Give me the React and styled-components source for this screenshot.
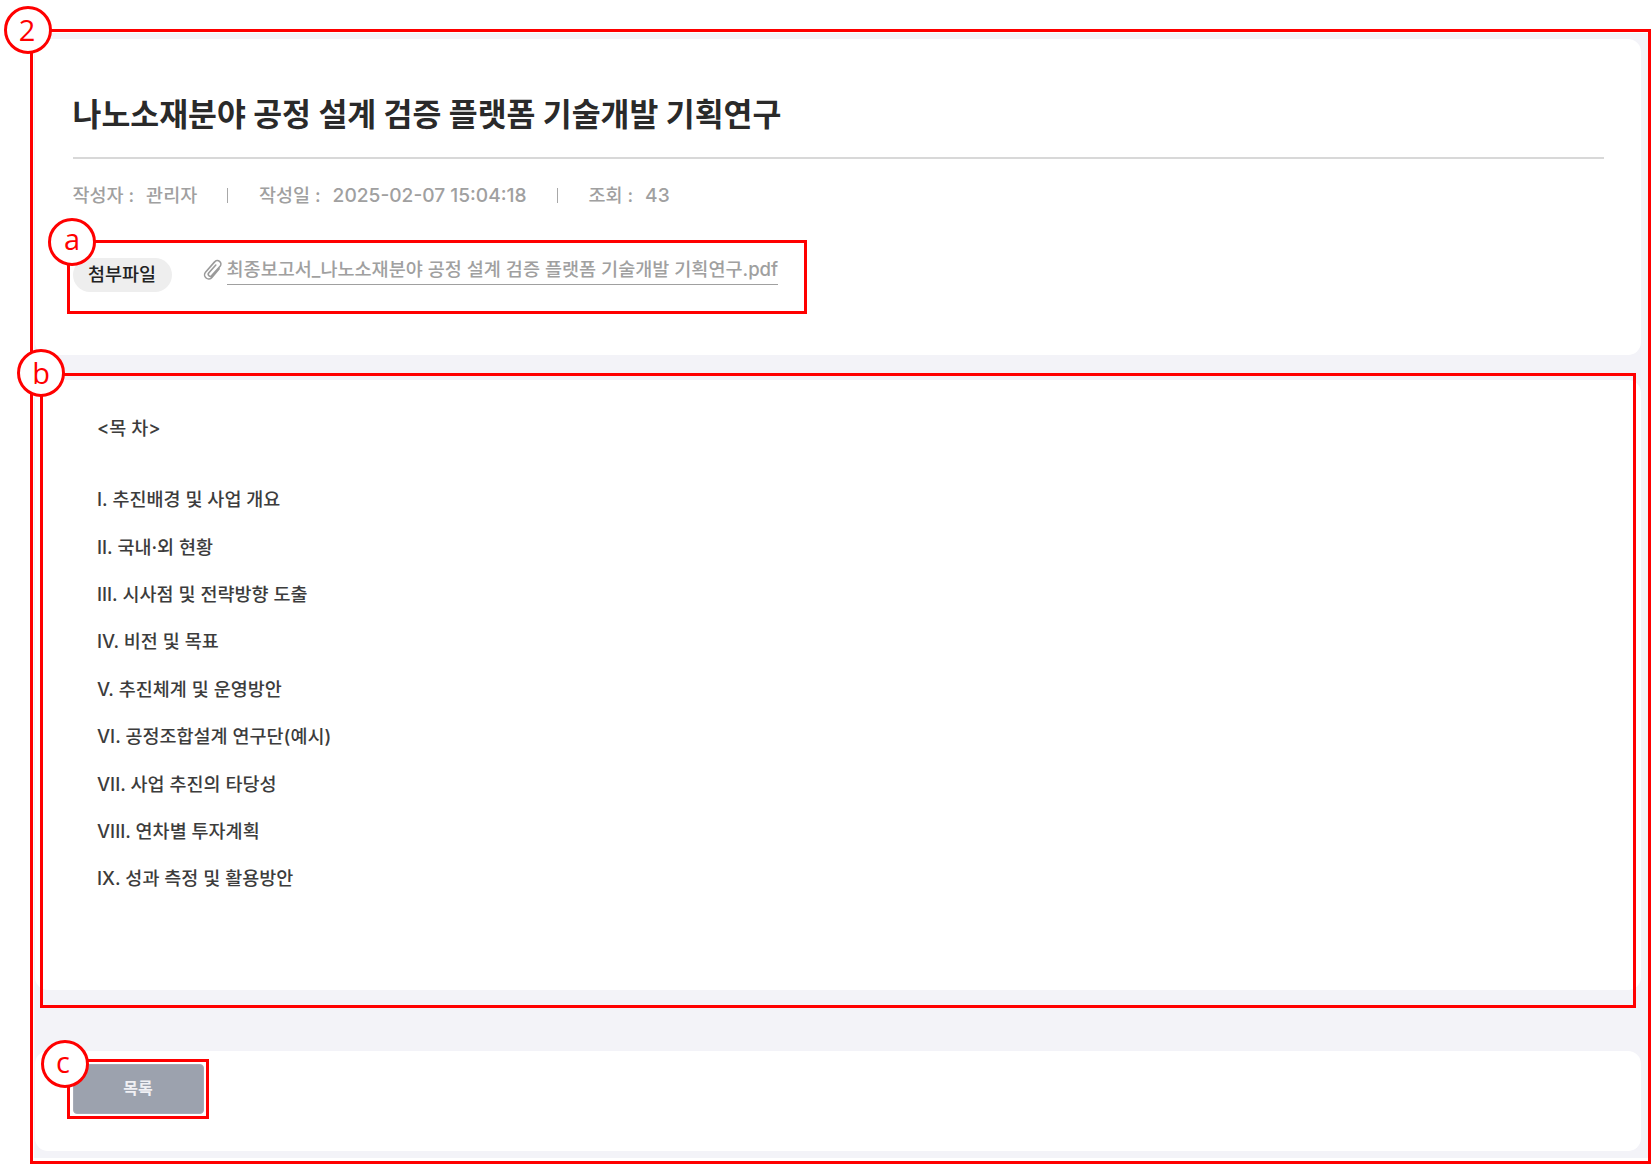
import React from "react";
import styled, { createGlobalStyle } from "styled-components";

const Global = createGlobalStyle`
  * { box-sizing: border-box; }
  body { margin: 0; background: #fff; font-family: Inter, "Noto Sans CJK KR", sans-serif; color: #2b2b2b; }
  h1, p { margin: 0; }
`;

const Page = styled.div`
  position: relative;
  width: 1651px;
  height: 1164px;
  padding: 33px 3px 6px 34px;
  overflow: hidden;
`;

const Board = styled.main`
  height: 1125px;
  padding: 6px 7px 0 1px;
  background: #f3f3f8;
  display: flex;
  flex-direction: column;
`;

const Card = styled.section`
  flex: none;
  height: ${(p) => p.$h}px;
  margin-bottom: ${(p) => p.$gap || 0}px;
  padding: ${(p) => p.$pad};
  background: #fff;
  border-radius: 13px;
`;

const Title = styled.h1`
  height: 120px;
  padding-top: 54px;
  border-bottom: 2px solid #d8d8d8;
  font-size: 31.4px;
  line-height: 44px;
  font-weight: 700;
  white-space: nowrap;
  color: #2a2a2a;
`;

const Meta = styled.div`
  display: flex;
  align-items: center;
  height: 28px;
  margin-top: 22px;
  font-size: 18.5px;
  font-weight: 500;
  color: #a0a0a0;
  white-space: nowrap;
`;

const MetaItem = styled.span`
  width: ${(p) => p.$w}px;
  display: flex;
  align-items: baseline;
  gap: 12px;
  line-height: 26px;
`;

const Digits = styled.span`
  font-size: 19.15px;
`;

const Divider = styled.i`
  width: 1px;
  height: 15px;
  margin: 1px 31px 0 0;
  background: #a8a8a8;
`;

const Attachment = styled.div`
  display: flex;
  margin-top: 49px;
`;

const Chip = styled.span`
  width: 99px;
  height: 34px;
  margin-right: 31px;
  border-radius: 17px;
  background: #eee;
  color: #222;
  font-size: 18.5px;
  line-height: 32px;
  font-weight: 500;
  text-align: center;
`;

const Clip = styled.svg`
  width: 20px;
  height: 22px;
  margin: 1px 4px 0 0;
`;

const FileLink = styled.a`
  height: 27px;
  border-bottom: 1px solid #a0a0a0;
  font-size: 18.56px;
  line-height: 23px;
  font-weight: 500;
  color: #a0a0a0;
  white-space: nowrap;
`;

const Line = styled.p`
  height: ${(p) => p.$h}px;
  font-size: 18.5px;
  line-height: 28px;
  font-weight: 500;
  color: #3c3c3c;
  white-space: nowrap;
`;

const ListButton = styled.button`
  display: block;
  width: 131px;
  height: 50px;
  padding: 0 0 5px;
  border: 1px solid #a6abb7;
  border-radius: 4px;
  background: #9ca2ae;
  color: #f0f0f4;
  font: 700 16px "Noto Sans CJK KR", sans-serif;
`;

const Frame = styled.div`
  position: absolute;
  left: ${(p) => p.$x}px;
  top: ${(p) => p.$y}px;
  width: ${(p) => p.$w}px;
  height: ${(p) => p.$h}px;
  border: 3px solid #f00;
`;

const Marker = styled.span`
  position: absolute;
  left: ${(p) => p.$x}px;
  top: ${(p) => p.$y}px;
  width: 48px;
  height: 48px;
  padding-right: ${(p) => p.$shift || 0}px;
  border: 3px solid #f00;
  border-radius: 50%;
  background: #fff;
  color: #f00;
  font: 400 29px "Open Sans", "Noto Sans", sans-serif;
  line-height: ${(p) => p.$lh || 40}px;
  text-align: center;
`;

const contents = [
  ["<목 차>", 71],
  ["I. 추진배경 및 사업 개요", 47.4],
  ["II. 국내·외 현황", 47.4],
  ["III. 시사점 및 전략방향 도출", 47.4],
  ["IV. 비전 및 목표", 47.4],
  ["V. 추진체계 및 운영방안", 47.4],
  ["VI. 공정조합설계 연구단(예시)", 47.4],
  ["VII. 사업 추진의 타당성", 47.4],
  ["VIII. 연차별 투자계획", 47.4],
  ["IX. 성과 측정 및 활용방안", 47.4],
];

export default function App() {
  return (
    <Page>
      <Global />
      <Board>
        <Card $h={316} $gap={25} $pad="0 37px 0 37.5px">
          <Title>나노소재분야 공정 설계 검증 플랫폼 기술개발 기획연구</Title>
          <Meta>
            <MetaItem $w={154.5}><span>작성자 :</span><span>관리자</span></MetaItem>
            <Divider />
            <MetaItem $w={297.5}><span>작성일 :</span><Digits>2025-02-07 15:04:18</Digits></MetaItem>
            <Divider />
            <MetaItem $w={100}><span>조회 :</span><Digits>43</Digits></MetaItem>
          </Meta>
          <Attachment>
            <Chip>첨부파일</Chip>
            <Clip viewBox="0 0 20 22" fill="none" stroke="#9a9a9a" strokeWidth="1.6" strokeLinecap="round" strokeLinejoin="round">
              <path d="M16.2 9.8 8.9 18.4a4.1 4.1 0 0 1-6.4-5.2L11.6 2.9a3.5 3.5 0 0 1 5.5 4.4L8.9 16.4a2 2 0 0 1-3.2-2.4l7.1-8" />
            </Clip>
            <FileLink>최종보고서_나노소재분야 공정 설계 검증 플랫폼 기술개발 기획연구.pdf</FileLink>
          </Attachment>
        </Card>
        <Card $h={610} $gap={61} $pad="34.2px 62px 0">
          {contents.map(([text, h]) => <Line key={text} $h={h}>{text}</Line>)}
        </Card>
        <Card $h={100} $pad="13px 37.5px">
          <ListButton>목록</ListButton>
        </Card>
      </Board>
      <Frame $x={30} $y={29} $w={1621} $h={1135} />
      <Frame $x={67} $y={240} $w={740} $h={74} />
      <Frame $x={40} $y={373} $w={1596} $h={635} />
      <Frame $x={67} $y={1059} $w={142} $h={60} />
      <Marker $x={4} $y={6} $lh={42} $shift={2}>2</Marker>
      <Marker $x={48} $y={218} $lh={36}>a</Marker>
      <Marker $x={17} $y={349} $lh={41}>b</Marker>
      <Marker $x={41} $y={1040} $lh={38} $shift={4}>c</Marker>
    </Page>
  );
}
